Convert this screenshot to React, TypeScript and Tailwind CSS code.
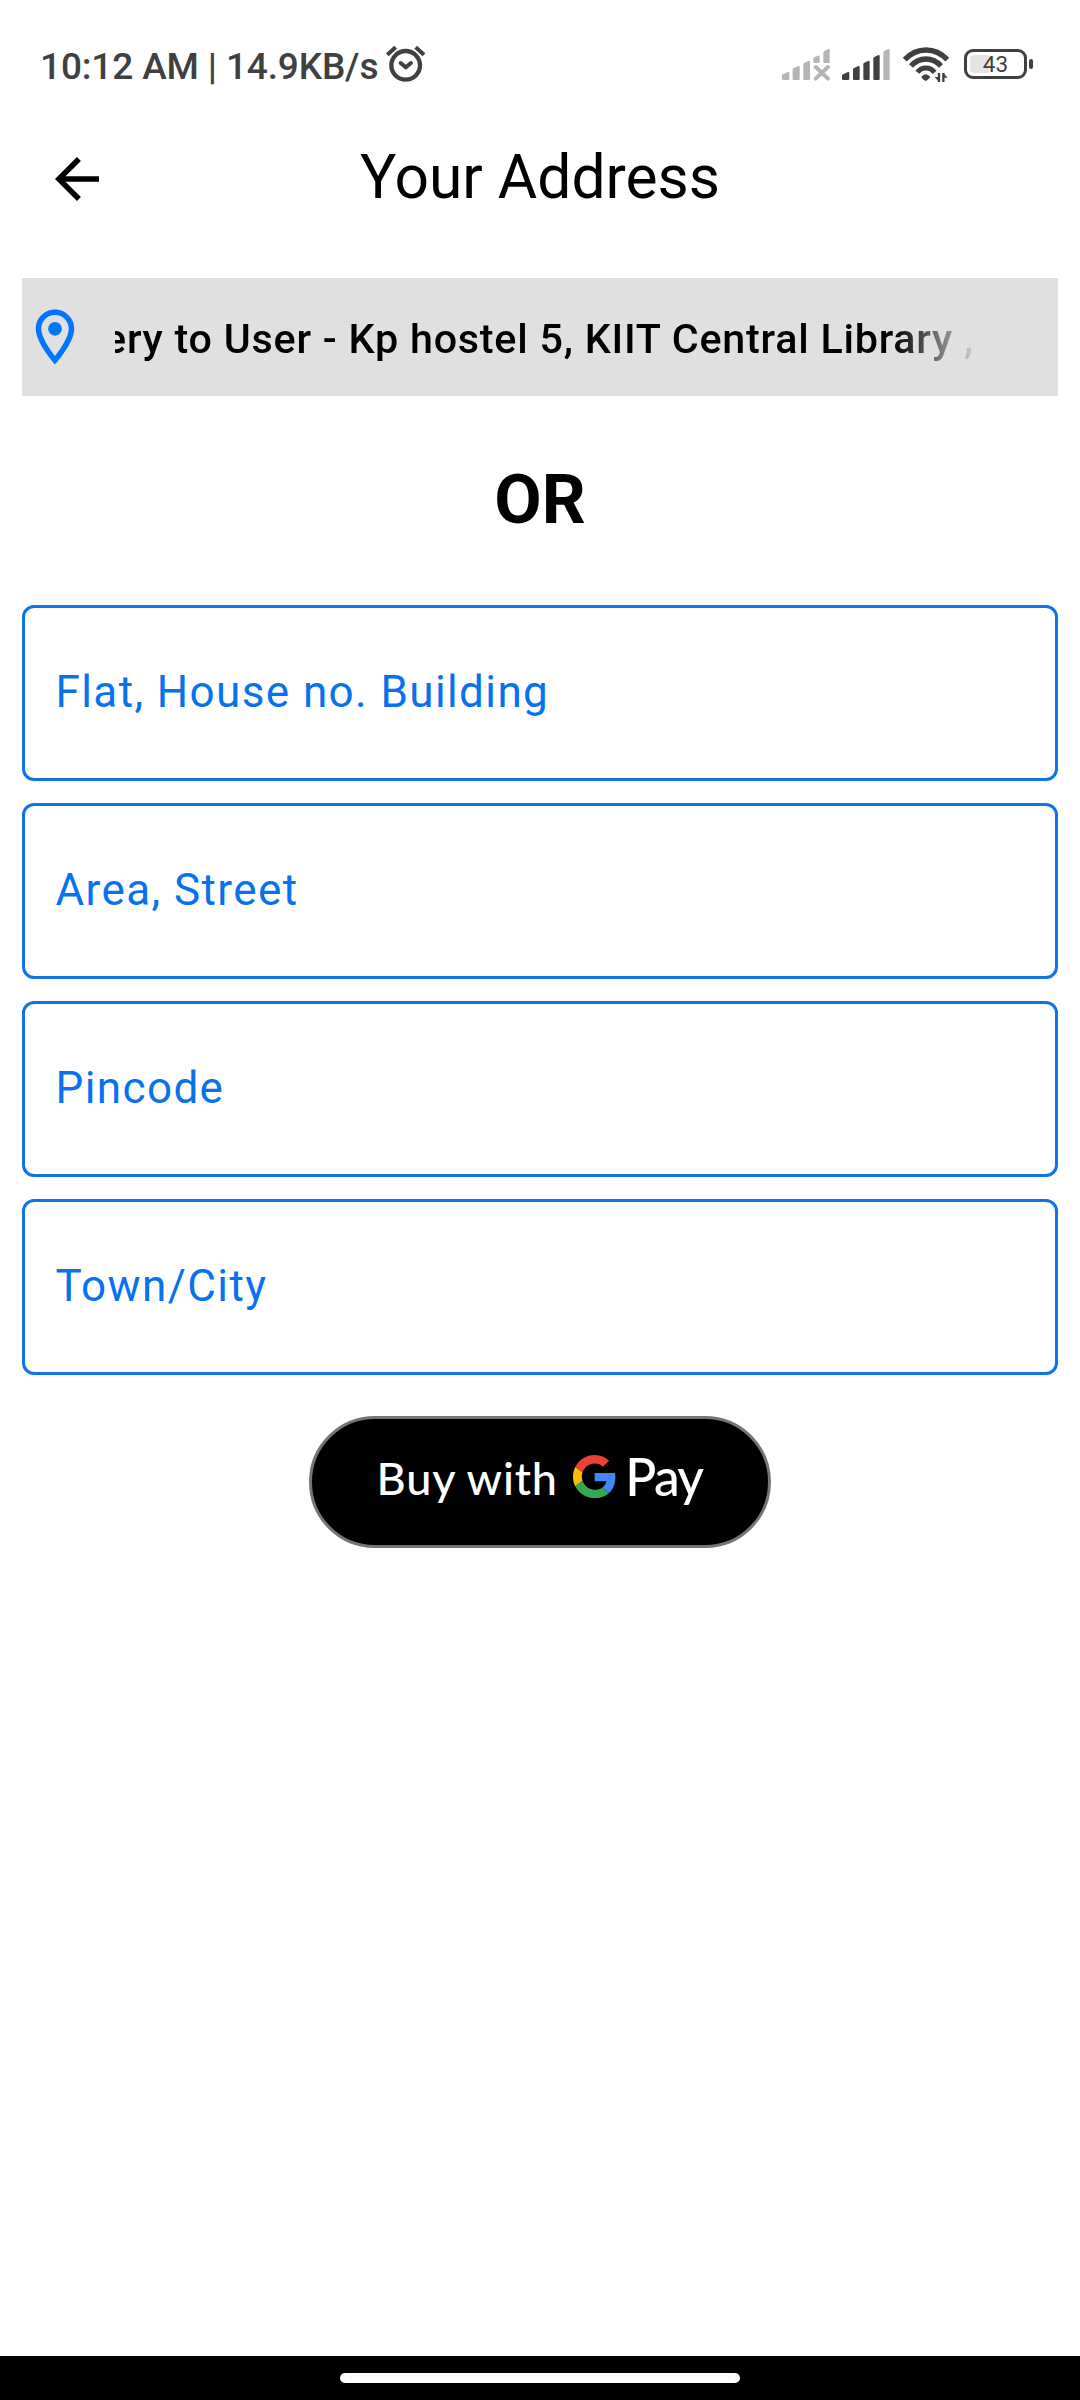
import React from "react";

function AlarmIcon() {
  return (
    <svg className="h-[37px] w-[42px]" viewBox="1095 45 126 111" fill="none" stroke="#404040" strokeLinecap="round" strokeLinejoin="round">
      <circle cx="1157" cy="106" r="43" strokeWidth="13" />
      <path d="M1102 74L1127 52M1212 74L1187 52" strokeWidth="12" strokeLinecap="butt" />
      <path d="M1142 99L1157 112L1173 99" strokeWidth="12" />
    </svg>
  );
}

function SignalOffIcon() {
  return (
    <svg className="h-[70px] w-[52px]" viewBox="60 0 156 210" fill="#b5b5b5">
      <path d="M66 134L84 126Q88 125 88 129V147Q88 150 85 150H69Q66 150 66 147Z" />
      <path d="M98 118Q98 115 101 114L114 109Q119 107 119 111V147Q119 150 116 150H101Q98 150 98 147Z" />
      <path d="M130 103Q130 99 133 98L145 93Q150 91 150 95V147Q150 150 147 150H133Q130 150 130 147Z" />
      <path d="M160 86Q160 83 163 82L174 77Q179 75 179 79V96Q179 99 176 99H163Q160 99 160 96Z" />
      <path d="M190 69Q190 65 193 63L204 58Q209 56 209 60V96Q209 99 206 99H193Q190 99 190 96Z" />
      <path d="M167 111L204 146M204 111L167 146" stroke="#b5b5b5" strokeWidth="12" strokeLinecap="round" />
    </svg>
  );
}

function SignalIcon() {
  return (
    <svg className="h-[70px] w-[52px]" viewBox="240 0 156 210" fill="#404040">
      <path d="M246 134L264 126Q268 125 268 129V147Q268 150 265 150H249Q246 150 246 147Z" />
      <path d="M279 118Q279 115 282 114L294 109Q299 107 299 111V147Q299 150 296 150H282Q279 150 279 147Z" />
      <path d="M310 103Q310 99 313 98L324 93Q329 91 329 95V147Q329 150 326 150H313Q310 150 310 147Z" />
      <path d="M340 86Q340 82 343 81L354 76Q359 74 359 78V147Q359 150 356 150H343Q340 150 340 147Z" />
      <path d="M370 69Q370 65 373 63L384 58Q389 56 389 60V147Q389 150 386 150H373Q370 150 370 147Z" fill="#b5b5b5" />
    </svg>
  );
}

function WifiIcon() {
  return (
    <svg className="h-[70px] w-[52px]" viewBox="420 0 156 210" fill="none" stroke="#404040">
      <path d="M434 89Q462 60 498 60Q534 60 562 89" strokeWidth="16" />
      <path d="M453 108Q472 87 498 87Q524 87 543 108" strokeWidth="16" />
      <path d="M472 127Q482 114 498 114Q513 114 524 127" strokeWidth="15" />
      <path d="M484 140Q497 125 511 140Q508 146 500 151.500Q497 153.500 494 151.500Q487 147 484 140Z" fill="#404040" stroke="none" />
      <path d="M537 129V156M550 129V156" strokeWidth="7" />
      <path d="M524 141L537 156V141ZM563 143L550 129V143Z" fill="#404040" stroke="none" />
    </svg>
  );
}

function Battery() {
  return (
    <div className="ml-[12px] flex items-center">
      <div className="relative flex h-[30px] w-[63px] items-center justify-center rounded-[9px] border-[3.5px] border-[#404040]">
        <div className="absolute top-[3px] bottom-[3px] left-[3px] w-[19px] rounded-l-[4px] bg-[#e4e4e4]" />
        <span className="relative mt-[2px] text-[22.5px] leading-none text-[#404040]">43</span>
      </div>
      <div className="ml-[2px] h-[10px] w-[4px] rounded-[2px] bg-[#404040]" />
    </div>
  );
}

function StatusBar() {
  return (
    <div className="flex h-[146px] items-start justify-between pt-[29px] pr-[47px] pl-[40px]">
      <div className="flex pt-[16px]">
        <span className="mt-[2px] text-[37px] leading-[40px] font-medium tracking-[-0.15px] whitespace-nowrap text-[#404040]">
          10:12 AM | 14.9KB/s
        </span>
        <div className="ml-[7px]">
          <AlarmIcon />
        </div>
      </div>
      <div className="flex h-[70px] items-center gap-[8px] pt-px">
        <SignalOffIcon />
        <SignalIcon />
        <WifiIcon />
        <div className="-ml-[8px] pb-[2px]">
          <Battery />
        </div>
      </div>
    </div>
  );
}

function Header() {
  return (
    <header className="flex h-[132px] items-start px-[44px]">
      <svg className="h-[66px] w-[66px]" viewBox="0 0 24 24" fill="black">
        <path d="M20 11H7.83l5.59-5.59L12 4l-8 8 8 8 1.41-1.41L7.83 13H20v-2z" />
      </svg>
      <h1 className="-mt-[4px] flex-1 text-center text-[60.5px] leading-[72px] font-normal">Your Address</h1>
      <div className="w-[66px]" />
    </header>
  );
}

function SavedAddress() {
  return (
    <div className="mx-[22px] flex h-[118px] items-center bg-[#e0e0e0]">
      <svg className="h-[66px] w-[66px] shrink-0" viewBox="0 0 24 24" fill="#0075ff">
        <path d="M12 2C8.13 2 5 5.13 5 9c0 5.25 7 13 7 13s7-7.75 7-13c0-3.87-3.13-7-7-7zM7 9c0-2.76 2.24-5 5-5s5 2.24 5 5c0 2.88-2.88 7.19-5 9.88C9.92 16.21 7 11.85 7 9z" />
        <circle cx="12" cy="9" r="2.5" />
      </svg>
      <div className="mt-[4px] ml-[27px] w-[868px] overflow-hidden [mask-image:linear-gradient(to_right,black_778px,transparent_866px)]">
        <p className="-ml-[105px] text-[41.25px] leading-[52px] font-medium tracking-[0.76px] whitespace-nowrap">
          Delivery to User - Kp hostel 5, KIIT Central Library ,
        </p>
      </div>
    </div>
  );
}

function GoogleG() {
  return (
    <svg className="ml-[14.7px] h-[43.3px] w-[43.3px]" viewBox="0 0 48 48">
      <path fill="#EA4335" d="M24 9.5c3.54 0 6.71 1.22 9.21 3.6l6.85-6.85C35.9 2.38 30.47 0 24 0 14.62 0 6.51 5.38 2.56 13.22l7.98 6.19C12.43 13.72 17.74 9.5 24 9.5z" />
      <path fill="#4285F4" d="M46.98 24.55c0-1.57-.15-3.09-.38-4.55H24v9.02h12.94c-.58 2.96-2.26 5.48-4.78 7.18l7.73 6c4.51-4.18 7.09-10.36 7.09-17.65z" />
      <path fill="#FBBC05" d="M10.53 28.59c-.48-1.45-.76-2.99-.76-4.59s.27-3.14.76-4.59l-7.98-6.19C.92 16.46 0 20.12 0 24c0 3.88.92 7.54 2.56 10.78l7.97-6.19z" />
      <path fill="#34A853" d="M24 48c6.48 0 11.93-2.13 15.89-5.81l-7.73-6c-2.15 1.45-4.92 2.3-8.16 2.3-6.26 0-11.57-4.22-13.47-9.91l-7.98 6.19C6.51 42.62 14.62 48 24 48z" />
    </svg>
  );
}

function PayButton() {
  return (
    <button className="mx-auto mt-[41px] flex h-[132px] w-[462px] items-start rounded-full border-[3px] border-[#757575] bg-black pl-[64.5px] font-['Lato',sans-serif] whitespace-nowrap text-white">
      <span className="mt-[32px] text-[45px] leading-[54px] font-medium tracking-[0.85px]">Buy with</span>
      <span className="mt-[36px]">
        <GoogleG />
      </span>
      <span className="mt-[26px] ml-[9.5px] text-[51.5px] leading-[62px] font-medium tracking-[-1.8px]">Pay</span>
    </button>
  );
}

const fields = ["Flat, House no. Building", "Area, Street", "Pincode", "Town/City"];

export default function App() {
  return (
    <div className="flex h-[2400px] w-[1080px] flex-col overflow-hidden bg-white font-['Roboto',sans-serif] text-black">
      <StatusBar />
      <Header />
      <SavedAddress />
      <h2 className="mt-[64px] text-center text-[68.75px] leading-[80px] font-bold">OR</h2>
      <div className="mx-[22px] mt-[65px] flex flex-col gap-[22px]">
        {fields.map((label) => (
          <div
            key={label}
            className="flex h-[176px] items-center rounded-[12px] border-[3px] border-[#1073e6] pb-[2px] pl-[30.5px] text-[44px] leading-[52px] tracking-[1.4px] text-[#0872ee]"
          >
            {label}
          </div>
        ))}
      </div>
      <PayButton />
      <div className="mt-auto flex h-[44px] justify-center bg-black pt-[17px]">
        <div className="h-[10px] w-[400px] rounded-full bg-white" />
      </div>
    </div>
  );
}
